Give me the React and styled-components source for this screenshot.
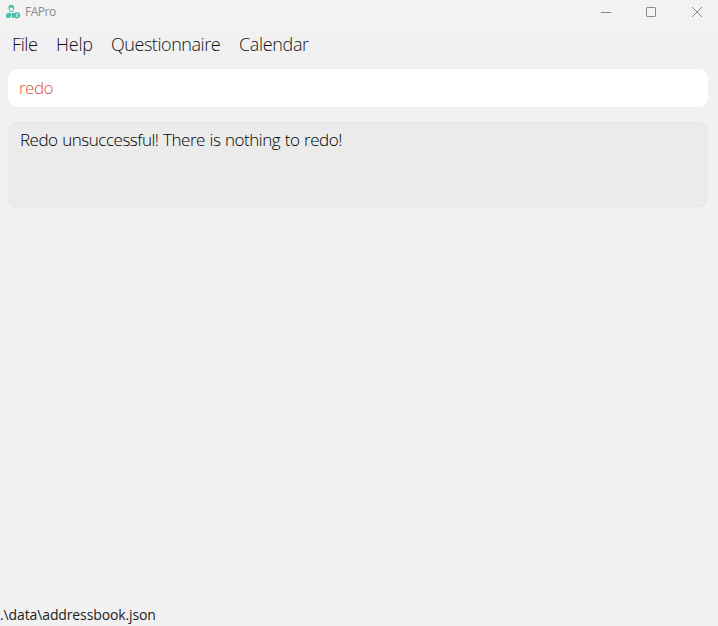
import React from "react";
import styled, { createGlobalStyle } from "styled-components";

const GlobalStyle = createGlobalStyle`
  * { box-sizing: border-box; }
  body {
    margin: 0;
    background: #f1f1f1;
    font-family: "Open Sans", "Noto Sans", sans-serif;
    overflow: hidden;
  }
`;

const Window = styled.div`
  display: flex;
  flex-direction: column;
  width: 718px;
  height: 626px;
  background: #f1f1f1;
`;

const TitleBar = styled.header`
  display: flex;
  align-items: center;
  height: 28px;
  padding: 0 15px 5px 5px;
  background: #f3f3f3;
`;

const Title = styled.span`
  flex: 1;
  margin-left: 4px;
  font-size: 12px;
  line-height: 16px;
  letter-spacing: -0.5px;
  color: #8c8c8c;
`;

const Controls = styled.div`
  display: flex;
  gap: 34px;
`;

const ControlButton = styled.button`
  display: flex;
  width: 12px;
  height: 12px;
  padding: 0;
  border: 0;
  background: none;

  &:first-child { margin-right: -1px; }
`;

const MenuBar = styled.nav`
  display: flex;
  height: 41px;
  padding-left: 12px;
`;

const MenuItem = styled.button`
  width: ${(p) => p.$width}px;
  padding: 0;
  border: 0;
  background: none;
  font-family: inherit;
  font-size: 18px;
  font-weight: 300;
  line-height: 32px;
  height: 32px;
  letter-spacing: ${(p) => p.$spacing}px;
  text-align: left;
  white-space: nowrap;
  color: #111;
`;

const CommandField = styled.input`
  height: 38px;
  margin: 0 10px 0 8px;
  padding: 0 11px 2px;
  border: 0;
  border-radius: 9px;
  outline: none;
  background: #fff;
  font-family: inherit;
  font-size: 17px;
  font-weight: 300;
  letter-spacing: -0.5px;
  color: #d0573c;
`;

const ResultPanel = styled.section`
  height: 85px;
  margin: 15px 11px 0 8px;
  padding: 5px 11px;
  border: 1px solid #e7e7e7;
  border-radius: 8px;
  background: #ebebeb;
  font-size: 17px;
  font-weight: 300;
  line-height: 24px;
  letter-spacing: -0.48px;
  word-spacing: 0.7px;
  white-space: nowrap;
  color: #000;
`;

const StatusBar = styled.footer`
  margin-top: auto;
  height: 22px;
  font-size: 14px;
  line-height: 21px;
  letter-spacing: -0.12px;
  color: #1c1c1c;
`;

const MENUS = [
  { label: "File", width: 44, spacing: -0.4 },
  { label: "Help", width: 55, spacing: -0.2 },
  { label: "Questionnaire", width: 128, spacing: -0.45 },
  { label: "Calendar", width: 80, spacing: -0.35 },
];

function AppIcon() {
  return (
    <svg width="16" height="16" viewBox="0 0 16 16" aria-hidden="true">
      <path d="M3.7 5.2C3 1.8 4.4.8 6.3.8s3.3 1 2.6 4.4C8.600 7.100 7.500 8 6.300 8S4 7.100 3.700 5.200Z" fill="#4dbda9" />
      <path d="M4.700 3.700 7.700 3.400 8 5.200C7.600 6.600 7 7 6.300 7S5 6.600 4.700 5.200Z" fill="#f0f5f4" />
      <path d="M1 13.700v-2.200C1 9.700 2.700 9 4.500 8.500L6.300 10l1.800-1.500 2.200.8-.9 1.600.2 2.800Z" fill="#4dbda9" />
      <path d="m6.300 9.800-.8 3.900h1.600Z" fill="#eef5f3" />
      <circle cx="12" cy="11.300" r="3.100" fill="#4dbda9" />
      <path d="M13 10h-1.500v1.200h1v1.300H11M12 9.400v3.800" fill="none" stroke="#e9f6f3" strokeWidth=".5" />
    </svg>
  );
}

function ControlIcon({ d }) {
  return (
    <svg width="12" height="12" viewBox="0 0 12 12" fill="none" stroke="#8a8a8a" aria-hidden="true">
      <path d={d} />
    </svg>
  );
}

const CONTROLS = [
  { name: "Minimize", d: "M1 6.500h10" },
  { name: "Maximize", d: "M2 1.500h8q.5 0 .5.500v8q0 .5-.5.500H2q-.5 0-.5-.5V2q0-.5.500-.5Z" },
  { name: "Close", d: "m1 1 10 10M11 1 1 11" },
];

export default function App() {
  return (
    <>
      <GlobalStyle />
      <Window>
        <TitleBar>
          <AppIcon />
          <Title>FAPro</Title>
          <Controls>
            {CONTROLS.map((c) => (
              <ControlButton key={c.name} aria-label={c.name}>
                <ControlIcon d={c.d} />
              </ControlButton>
            ))}
          </Controls>
        </TitleBar>
        <MenuBar>
          {MENUS.map((m) => (
            <MenuItem key={m.label} $width={m.width} $spacing={m.spacing}>
              {m.label}
            </MenuItem>
          ))}
        </MenuBar>
        <CommandField defaultValue="redo" aria-label="Command" spellCheck={false} />
        <ResultPanel>Redo unsuccessful! There is nothing to redo!</ResultPanel>
        <StatusBar>.\data\addressbook.json</StatusBar>
      </Window>
    </>
  );
}
